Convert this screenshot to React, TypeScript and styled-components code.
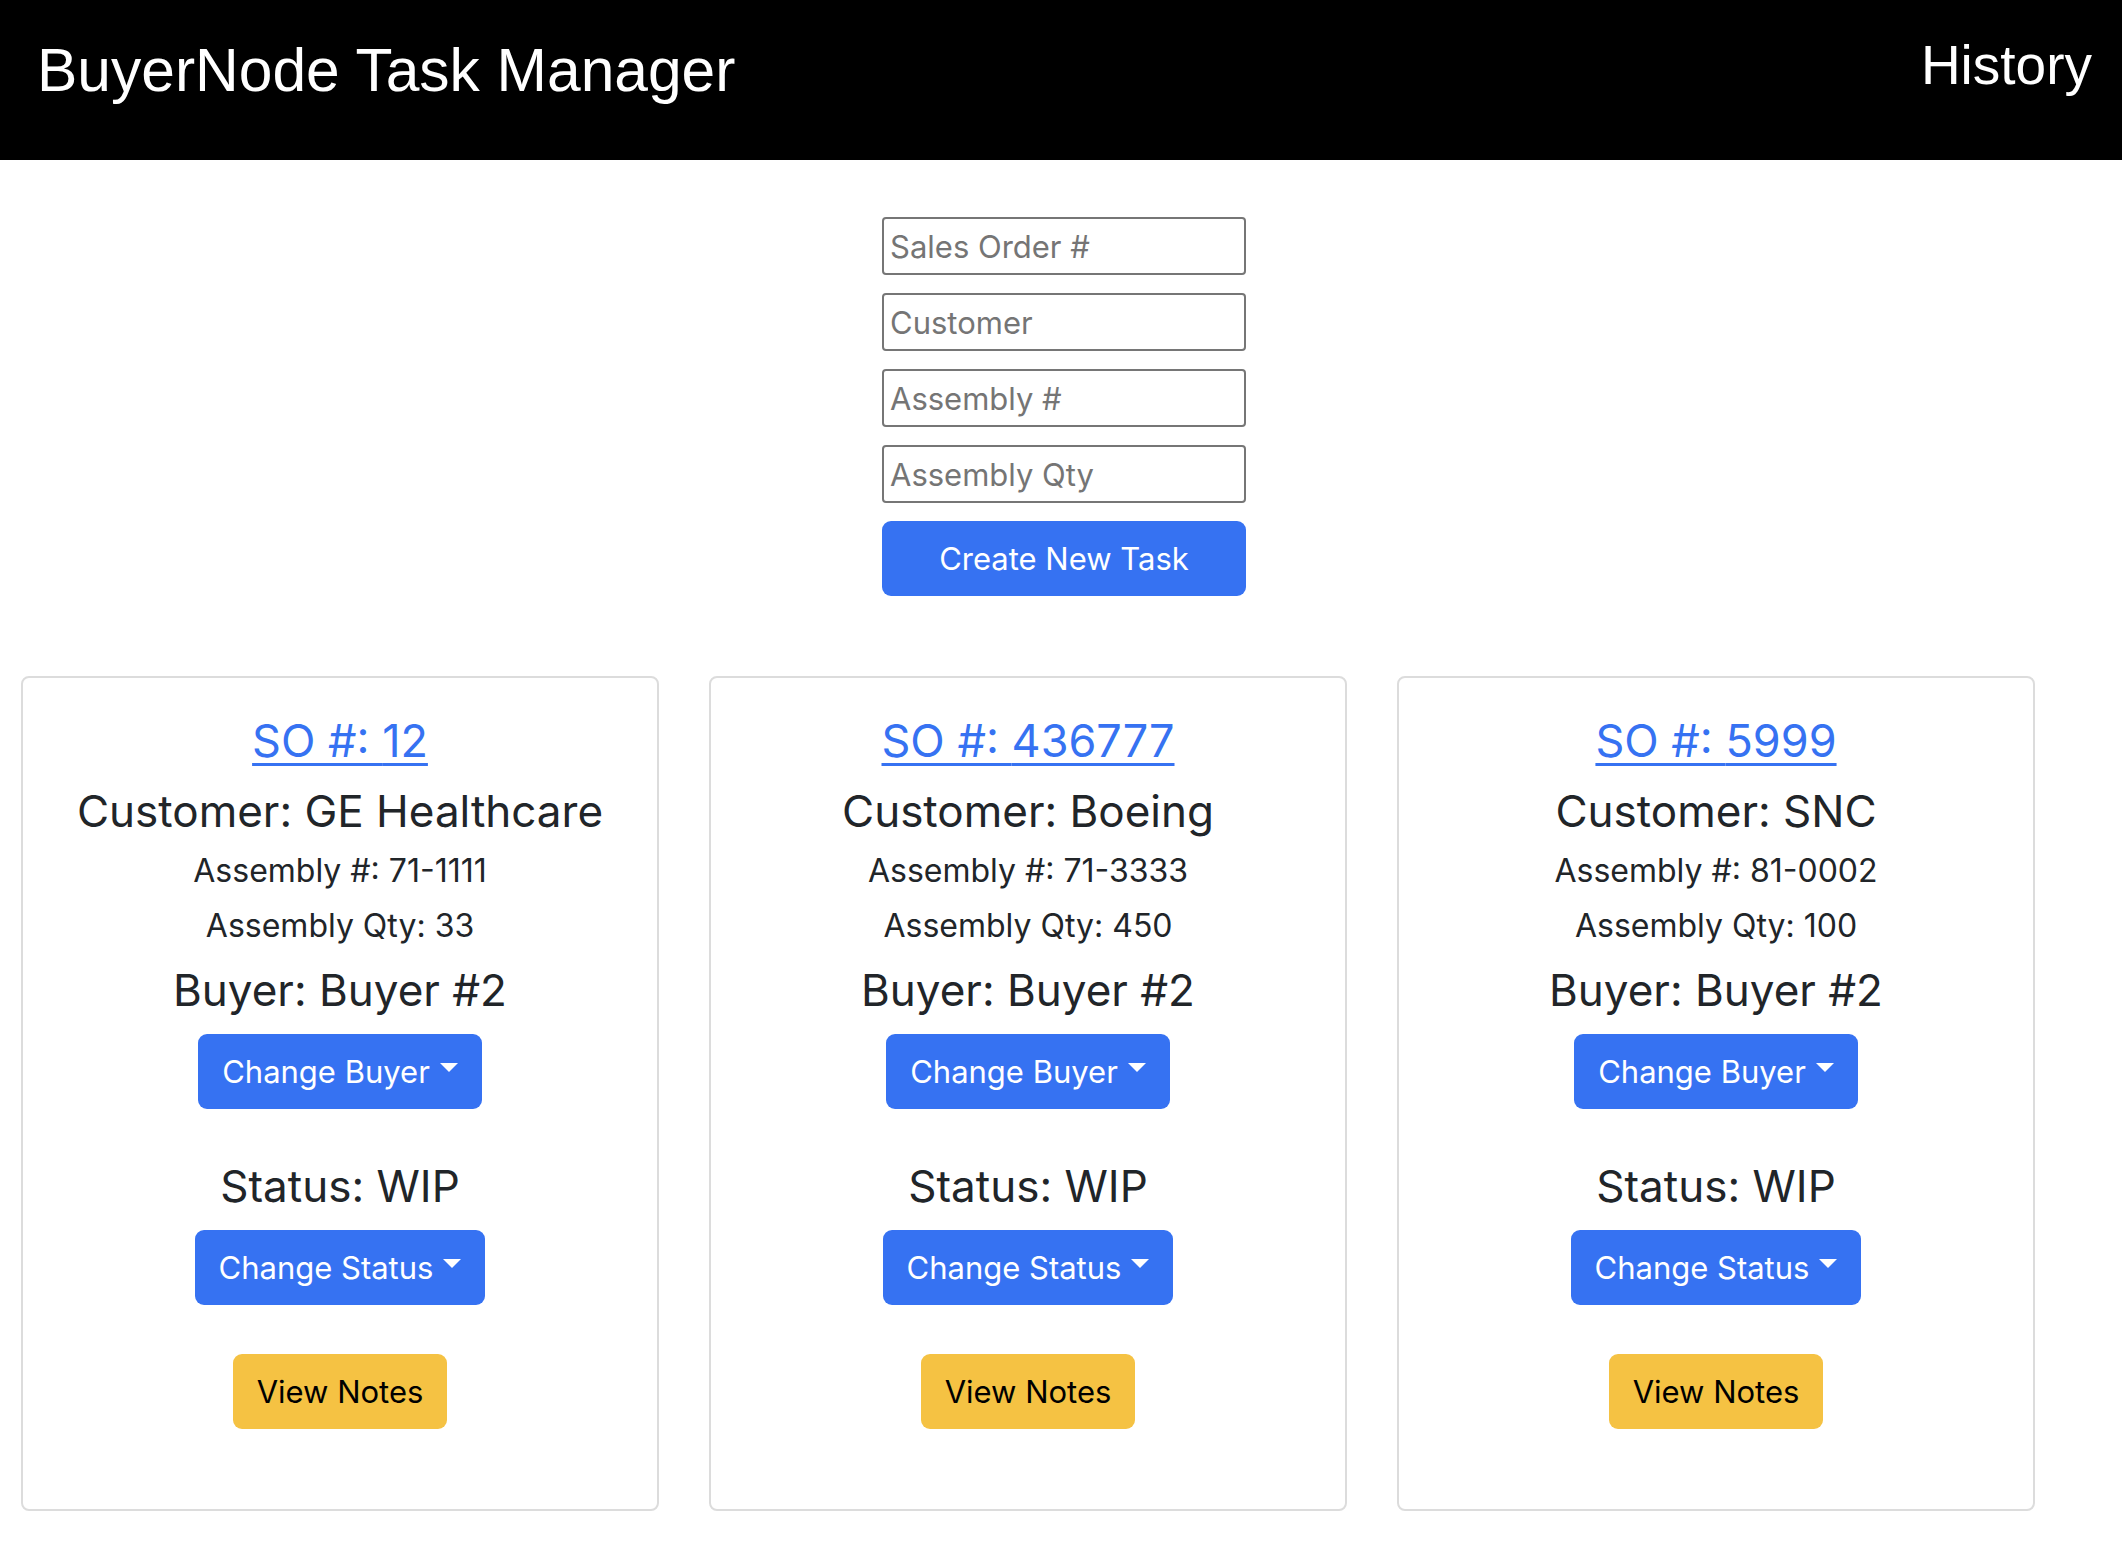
import styled, { createGlobalStyle } from 'styled-components';

const GlobalStyle = createGlobalStyle`
  body {
    margin: 0;
    background: #ffffff;
    font-family: Inter, "Noto Sans", sans-serif;
    color: #212529;
  }
  * { box-sizing: border-box; }
`;

type Task = {
  so: string;
  customer: string;
  assembly: string;
  qty: string;
  buyer: string;
  status: string;
};

const tasks: Task[] = [
  { so: '12', customer: 'GE Healthcare', assembly: '71-1111', qty: '33', buyer: 'Buyer #2', status: 'WIP' },
  { so: '436777', customer: 'Boeing', assembly: '71-3333', qty: '450', buyer: 'Buyer #2', status: 'WIP' },
  { so: '5999', customer: 'SNC', assembly: '81-0002', qty: '100', buyer: 'Buyer #2', status: 'WIP' },
];

function App() {
  return (
    <>
      <GlobalStyle />
      <Header>
        <Title>BuyerNode Task Manager</Title>
        <NavLink href='#'>History</NavLink>
      </Header>
      <Form>
        <Input placeholder='Sales Order #' />
        <Input placeholder='Customer' />
        <Input placeholder='Assembly #' />
        <Input placeholder='Assembly Qty' />
        <Button $color='primary' $full>Create New Task</Button>
      </Form>
      <CardRow>
        {tasks.map((t) => (
          <Card key={t.so}>
            <SoLink href='#'>SO #: {t.so}</SoLink>
            <Large $top={8}>Customer: {t.customer}</Large>
            <Small>Assembly #: {t.assembly}</Small>
            <Small>Assembly Qty: {t.qty}</Small>
            <Large $top={11}>Buyer: {t.buyer}</Large>
            <Button $color='primary' $caret $top={15}>Change Buyer</Button>
            <Large $top={48}>Status: {t.status}</Large>
            <Button $color='primary' $caret $top={15}>Change Status</Button>
            <Button $color='warning' $top={49}>View Notes</Button>
          </Card>
        ))}
      </CardRow>
    </>
  );
}

export default App;

const Header = styled.header`
  height: 160px;
  background: #000000;
  display: flex;
  justify-content: space-between;
  align-items: flex-start;
  padding: 0 30px 0 37px;
  font-family: "Liberation Sans", Arial, sans-serif;
`;

const Title = styled.h1`
  margin: 36px 0 0;
  color: #ffffff;
  font-size: 60.5px;
  font-weight: 400;
  line-height: 68px;
`;

const NavLink = styled.a`
  margin-top: 34px;
  color: #ffffff;
  font-size: 55px;
  line-height: 62px;
  text-decoration: none;
`;

const Form = styled.div`
  width: 364px;
  margin: 57px 0 0 calc(50% - 179px);
  display: flex;
  flex-direction: column;
  gap: 18px;
`;

const Input = styled.input`
  height: 58px;
  width: 100%;
  border: 2px solid #767676;
  border-radius: 4px;
  padding: 0 6px;
  font-family: Inter, "Noto Sans", sans-serif;
  font-size: 31px;
  color: #212529;
  &::placeholder {
    color: #757575;
  }
`;

const CardRow = styled.div`
  display: flex;
  gap: 50px;
  padding: 0 0 40px 21px;
  margin-top: 80px;
`;

const Card = styled.div`
  width: 638px;
  height: 835px;
  border: 2px solid #dcdcdc;
  border-radius: 8px;
  display: flex;
  flex-direction: column;
  align-items: center;
  padding-top: 30px;
`;

const SoLink = styled.a`
  color: #3672f2;
  font-size: 45px;
  line-height: 66px;
  text-decoration: underline;
  text-decoration-thickness: 3px;
  text-underline-offset: 6px;
`;

const Large = styled.div<{ $top?: number }>`
  margin-top: ${(p) => p.$top ?? 6}px;
  font-size: 44px;
  line-height: 58px;
`;

const Small = styled.div`
  font-size: 32px;
  line-height: 48px;
  margin-top: 7px;
`;

const Button = styled.button<{ $color: 'primary' | 'warning'; $caret?: boolean; $full?: boolean; $top?: number }>`
  margin-top: ${(p) => p.$top ?? 0}px;
  height: 75px;
  width: ${(p) => (p.$full ? '100%' : 'auto')};
  padding: 0 24px;
  border: none;
  border-radius: 9px;
  background: ${(p) => (p.$color === 'primary' ? '#3672f2' : '#f5c243')};
  color: ${(p) => (p.$color === 'primary' ? '#ffffff' : '#000000')};
  font-family: Inter, "Noto Sans", sans-serif;
  font-size: 31px;
  display: inline-flex;
  align-items: center;
  justify-content: center;
  &::after {
    content: '';
    display: ${(p) => (p.$caret ? 'inline-block' : 'none')};
    margin-left: 10px;
    margin-top: -8px;
    border-top: 9px solid currentColor;
    border-left: 9px solid transparent;
    border-right: 9px solid transparent;
  }
`;
